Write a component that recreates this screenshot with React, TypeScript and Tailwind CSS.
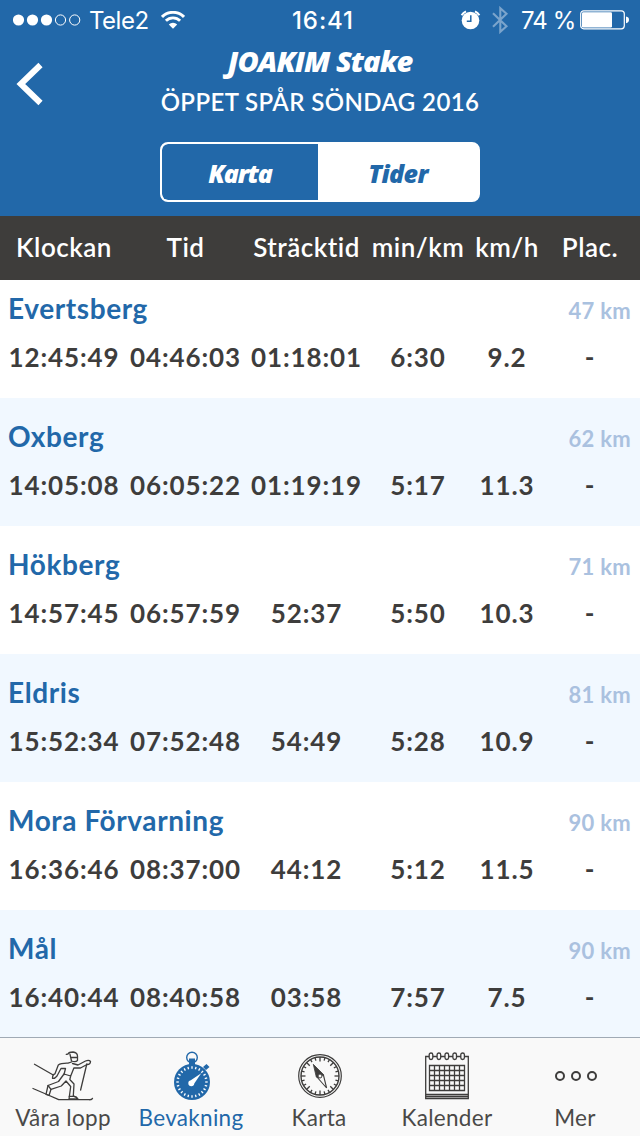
import type { ReactNode } from "react";

type Split = {
  name: string;
  distance: string;
  values: string[];
};

const headings = ["Klockan", "Tid", "Sträcktid", "min/km", "km/h", "Plac."];

const splits: Split[] = [
  { name: "Evertsberg", distance: "47 km", values: ["12:45:49", "04:46:03", "01:18:01", "6:30", "9.2", "-"] },
  { name: "Oxberg", distance: "62 km", values: ["14:05:08", "06:05:22", "01:19:19", "5:17", "11.3", "-"] },
  { name: "Hökberg", distance: "71 km", values: ["14:57:45", "06:57:59", "52:37", "5:50", "10.3", "-"] },
  { name: "Eldris", distance: "81 km", values: ["15:52:34", "07:52:48", "54:49", "5:28", "10.9", "-"] },
  { name: "Mora Förvarning", distance: "90 km", values: ["16:36:46", "08:37:00", "44:12", "5:12", "11.5", "-"] },
  { name: "Mål", distance: "90 km", values: ["16:40:44", "08:40:58", "03:58", "7:57", "7.5", "-"] },
];

const columns = "grid grid-cols-[120px_123px_119px_104px_74px_92px] pl-1 text-center whitespace-nowrap";

const StatusBar = () => (
  <div className="flex h-10 items-center font-['Inter',sans-serif] text-[24px] leading-10 text-white">
    <div className="flex w-[292px] items-center pl-[13px]">
      <svg width="68" height="12" viewBox="0 0 68 12" fill="#fff">
        <circle cx="5.5" cy="6" r="5.6" />
        <circle cx="19.5" cy="6" r="5.6" />
        <circle cx="33.5" cy="6" r="5.6" />
        <g fill="none" stroke="#fff">
          <circle cx="47.5" cy="6" r="5.1" />
          <circle cx="61.7" cy="6" r="5.1" />
        </g>
      </svg>
      <span className="mt-0.5 ml-[8px] w-[72px] tracking-[-0.5px]">Tele2</span>
      <svg width="24" height="18" viewBox="0 0 24 18" fill="none" stroke="#fff">
        <path d="M1 5.9A15.6 15.6 0 0 1 23 5.9" strokeWidth="3" />
        <path d="M4.9 9.8A10 10 0 0 1 19.1 9.8" strokeWidth="2.9" />
        <path d="M12 17.8 7.8 13.5A6 6 0 0 1 16.2 13.5Z" fill="#fff" stroke="none" />
      </svg>
    </div>
    <span className="mt-0.5 w-[168px] font-medium tracking-[0.9px]">16:41</span>
    <svg width="21" height="20" viewBox="0 0 21 20">
      <circle cx="10.5" cy="10.5" r="8.8" fill="#fff" />
      <path d="M1.6 5.3A10.5 10.5 0 0 1 6 1.3M15 1.3A10.5 10.5 0 0 1 19.4 5.3" fill="none" stroke="#fff" strokeWidth="2" />
      <path d="M10.8 5.3V11.2H6.8" fill="none" stroke="#2268a9" strokeWidth="1.5" />
    </svg>
    <svg className="ml-[11px]" width="17" height="28" viewBox="0 0 17 28" fill="none" stroke="#7ba4cc" strokeWidth="2.1">
      <path d="M1 7.2 14.5 20.2 8.3 25.8V2.2L14.5 7.8 1 20.8" />
    </svg>
    <span className="mt-0.5 ml-[12px] w-[59px] tracking-[-0.9px] whitespace-nowrap">74 %</span>
    <svg width="50" height="20" viewBox="0 0 50 20">
      <rect x="0.7" y="0.8" width="43.6" height="18" rx="3" fill="none" stroke="#fff" strokeWidth="1.2" />
      <rect x="2" y="2.2" width="30" height="15.2" rx="1.2" fill="#fff" />
      <path d="M46 6.5Q49 7 49 9.8T46 13.2Z" fill="#fff" />
    </svg>
  </div>
);

const Header = () => (
  <header className="h-[216px] shrink-0 bg-[#2268a9] text-white">
    <StatusBar />
    <div className="flex h-[102px]">
      <button className="flex w-[100px] items-start pt-[22px] pl-4">
        <svg width="28" height="44" viewBox="0 0 28 44" fill="none" stroke="#fff" strokeWidth="6">
          <path d="M24.5 3 4.8 22 24.5 41" />
        </svg>
      </button>
      <div className="w-[440px] text-center whitespace-nowrap">
        <h1 className="mt-[3px] font-['Open_Sans',sans-serif] text-[29px] leading-9 font-extrabold tracking-[-1px] italic">
          JOAKIM Stake
        </h1>
        <h2 className="mt-[9px] font-['Lato',sans-serif] text-[24px] leading-7 font-semibold tracking-[0.4px]">
          ÖPPET SPÅR SÖNDAG 2016
        </h2>
      </div>
    </div>
    <div className="mx-auto flex h-[60px] w-80 overflow-hidden rounded-lg border-2 border-white bg-white text-center font-['Open_Sans',sans-serif] text-[25px] leading-[59px] font-extrabold tracking-[-1.2px] italic">
      <button className="w-[156px] rounded-l-md bg-[#2268a9]">Karta</button>
      <button className="flex-1 tracking-[-0.6px] text-[#2268a9]">Tider</button>
    </div>
  </header>
);

const SplitRow = ({ split, index }: { split: Split; index: number }) => (
  <div className={`flex shrink-0 flex-col ${index === 0 ? "h-[118px] pt-[12px]" : "h-32 pt-[22px]"} ${index % 2 ? "bg-[#f1f8ff]" : "bg-white"}`}>
    <div className="flex h-8 items-baseline justify-between pr-[9px] pl-2 leading-8">
      <span className="text-[28px] font-bold tracking-[0.6px] text-[#2268a9]">{split.name}</span>
      <span className="text-[22px] font-bold tracking-[0.3px] text-[#aac1df]">{split.distance}</span>
    </div>
    <div className={`${columns} mt-[17px] text-[26px] leading-8 font-bold tracking-[0.9px] text-[#3e3d3c]`}>
      {split.values.map((value, i) => (
        <span key={i}>{value}</span>
      ))}
    </div>
  </div>
);

const SkierIcon = () => (
  <svg width="64" height="52" viewBox="0 0 64 52" fill="none" stroke="#3e3d3c" strokeWidth="1.3" strokeLinejoin="round" strokeLinecap="round">
    <path d="M2.5 14.3 20.8 24.7M1 38.5Q14 44 26.7 49.7H57Q60 50 60.5 48.3M54.8 14 48.6 40" />
    <path d="M34.3 4.3 36 4Q37 2 41 2Q45.3 2.5 45.5 6V10.5Q43.5 12.5 39.5 11L38 4.3M38.7 7.5H45.3" />
    <path d="M39.5 12 36 13.2Q29 13 26.3 15L23 23.8Q20.5 24.3 20.5 28.3Q22.5 29 25 26L29 18.5H33.5L32 24.5" />
    <path d="M40.5 13.5 46 15 53.5 11Q57 9.5 58.5 11.5Q58.5 14.5 55 14.5L48.5 18 42 17.8 38.7 26 32 24 26.5 31.5 16 35.5 14 44.3 17 45.5 19 39.3 29.3 36 34 31 38.7 36.5 37 49H46Q45 47 41.3 46L42 34 37.8 29.5 38.7 26" />
    <path d="M16 35.5 19 39.3M37.2 46.3H41.3" />
  </svg>
);

const ticks = Array.from({ length: 24 }, (_, i) => i * 15);

const StopwatchIcon = () => (
  <svg width="38" height="50" viewBox="0 0 38 50" fill="none">
    <circle cx="19" cy="6.5" r="5.3" stroke="#2268a9" strokeWidth="1.4" />
    <path d="M16 7.5H22V15H16ZM30 16 33 19 36.5 16 33.5 13Z" fill="#2268a9" />
    <circle cx="19" cy="31" r="18" fill="#2268a9" />
    {ticks.map((a) => (
      <path key={a} d="M19 15.3V17.8" stroke="#fff" strokeWidth="1.3" transform={`rotate(${a} 19 31)`} />
    ))}
    <path d="M28.2 22.2 21.3 32.6A3 3 0 1 1 17.8 29.3Z" fill="#fff" />
  </svg>
);

const CompassIcon = () => (
  <svg width="44" height="44" viewBox="0 0 44 44" fill="none" stroke="#3e3d3c">
    <circle cx="22" cy="22" r="21.3" strokeWidth="1.2" />
    <circle cx="22" cy="22" r="19" strokeWidth="1.4" />
    {ticks.map((a) => (
      <path key={a} d={a % 45 ? "M22 3V6" : "M22 3V7.5"} strokeWidth="1.3" transform={`rotate(${a} 22 22)`} />
    ))}
    <path d="M15.3 10.3 25.5 20.5 21 24 18.3 23Z" fill="#3e3d3c" strokeWidth="0.8" />
    <path d="M18.5 22.5 28.6 34 25.3 20.5" strokeWidth="1.1" />
    <circle cx="22" cy="22" r="2" fill="#f9f9f9" />
  </svg>
);

const CalendarIcon = () => (
  <svg className="-ml-0.5" width="44" height="48" viewBox="0 0 44 48" fill="none" stroke="#3e3d3c" strokeWidth="1.3">
    <path d="M4 4.5H.7V46.5H43.3V4.5H40M8 4.5H12M16 4.5H20M24 4.5H28M32 4.5H36M.7 42.5H43.3M.7 44.5H43.3" />
    {[4.2, 12.1, 20, 27.9, 35.8].map((x) => (
      <rect key={x} x={x} y="1" width="3.6" height="6.5" rx="1.8" />
    ))}
    <path d="M4.5 13.5H39.5V38.5H4.5ZM9.5 13.5V38.5M14.5 13.5V38.5M19.5 13.5V38.5M24.5 13.5V38.5M29.5 13.5V38.5M34.5 13.5V38.5M4.5 18.5H39.5M4.5 23.5H39.5M4.5 28.5H39.5M4.5 33.5H39.5" />
  </svg>
);

const MoreIcon = () => (
  <svg width="42" height="10" viewBox="0 0 42 10" fill="none" stroke="#3e3d3c" strokeWidth="2">
    <circle cx="5" cy="5" r="4" />
    <circle cx="21" cy="5" r="4" />
    <circle cx="37" cy="5" r="4" />
  </svg>
);

const Tab = ({ icon, label, active }: { icon: ReactNode; label: string; active?: boolean }) => (
  <button className={`flex w-32 flex-col items-center ${active ? "text-[#2268a9]" : "text-[#4a4948]"}`}>
    <span className="mt-[12px] flex h-[52px] items-center justify-center">{icon}</span>
    <span className="pr-0.5 text-[22.5px] leading-8 tracking-[0.3px] whitespace-nowrap">{label}</span>
  </button>
);

const App = () => {
  return (
    <div className="flex h-[1136px] w-[640px] flex-col overflow-hidden bg-white font-['Lato',sans-serif]">
      <Header />
      <div className={`${columns} h-16 shrink-0 bg-[#3e3d3b] text-[26px] leading-[62px] font-semibold tracking-[0.5px] text-white`}>
        {headings.map((heading) => (
          <span key={heading}>{heading}</span>
        ))}
      </div>
      <main className="flex min-h-0 flex-1 flex-col overflow-hidden">
        {splits.map((split, i) => (
          <SplitRow key={split.name} split={split} index={i} />
        ))}
      </main>
      <nav className="flex h-[99px] shrink-0 border-t border-[#a0aab5] bg-[#f9f9f9]">
        <Tab icon={<SkierIcon />} label="Våra lopp" />
        <Tab icon={<StopwatchIcon />} label="Bevakning" active />
        <Tab icon={<CompassIcon />} label="Karta" />
        <Tab icon={<CalendarIcon />} label="Kalender" />
        <Tab icon={<MoreIcon />} label="Mer" />
      </nav>
    </div>
  );
};

export default App;
